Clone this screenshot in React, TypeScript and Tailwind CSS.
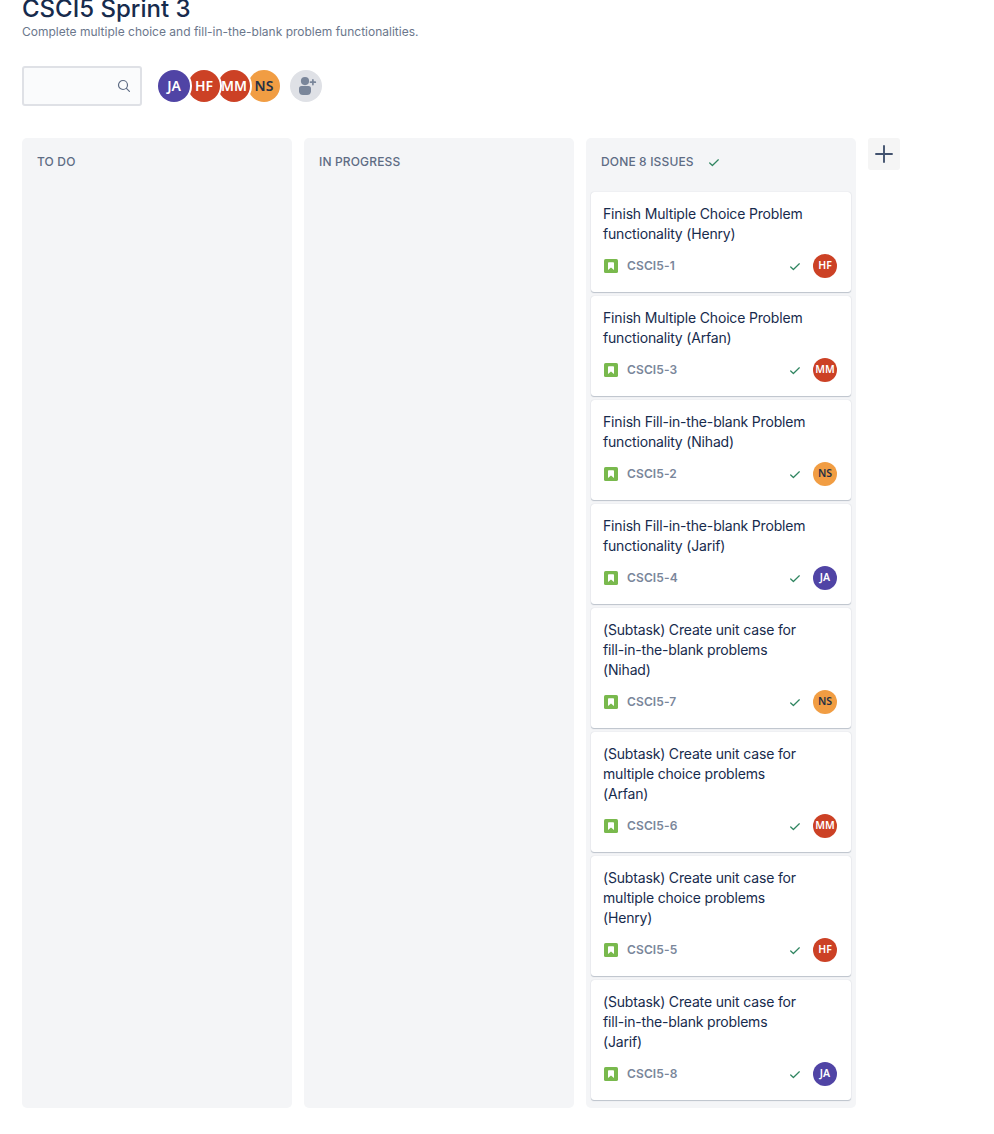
import type { ReactNode } from 'react';

type Person = { initials: string; color: string };

const people: Record<string, Person> = {
  JA: { initials: 'JA', color: 'bg-[#5044a5] text-white' },
  HF: { initials: 'HF', color: 'bg-[#cc4125] text-white' },
  MM: { initials: 'MM', color: 'bg-[#cc4125] text-white' },
  NS: { initials: 'NS', color: 'bg-[#f19d43] text-[#253045]' },
};

const team = [
  { key: 'JA', layer: 'z-40' },
  { key: 'HF', layer: 'z-30' },
  { key: 'MM', layer: 'z-20' },
  { key: 'NS', layer: 'z-10' },
];

const issues = [
  { id: 'CSCI5-1', lines: ['Finish Multiple Choice Problem', 'functionality (Henry)'], who: 'HF' },
  { id: 'CSCI5-3', lines: ['Finish Multiple Choice Problem', 'functionality (Arfan)'], who: 'MM' },
  { id: 'CSCI5-2', lines: ['Finish Fill-in-the-blank Problem', 'functionality (Nihad)'], who: 'NS' },
  { id: 'CSCI5-4', lines: ['Finish Fill-in-the-blank Problem', 'functionality (Jarif)'], who: 'JA' },
  { id: 'CSCI5-7', lines: ['(Subtask) Create unit case for', 'fill-in-the-blank problems', '(Nihad)'], who: 'NS' },
  { id: 'CSCI5-6', lines: ['(Subtask) Create unit case for', 'multiple choice problems', '(Arfan)'], who: 'MM' },
  { id: 'CSCI5-5', lines: ['(Subtask) Create unit case for', 'multiple choice problems', '(Henry)'], who: 'HF' },
  { id: 'CSCI5-8', lines: ['(Subtask) Create unit case for', 'fill-in-the-blank problems', '(Jarif)'], who: 'JA' },
];

function Check() {
  return (
    <svg className="block size-3 shrink-0" viewBox="0 0 12 12" fill="none" stroke="#2f8560" strokeWidth="1.25" strokeLinecap="round" strokeLinejoin="round">
      <path d="M1.700 7 4.400 9.500 10.300 3.800" />
    </svg>
  );
}

function Story() {
  return (
    <svg className="ml-px size-3.5 shrink-0" viewBox="0 0 14 14">
      <rect width="14" height="14" rx="1.6" fill="#79b94d" />
      <path d="M4 4a.8.8 0 0 1 .8-.8h4.400a.8.8 0 0 1 .8.8V11L7 8.500 4 11Z" fill="#fff" />
    </svg>
  );
}

function Card({ issue }: { issue: (typeof issues)[number] }) {
  const person = people[issue.who];
  return (
    <article className="rounded-[3px] bg-white px-3 pt-3 pb-3.5 shadow-[0_1px_1px_rgba(9,30,66,0.22),0_0_1px_rgba(9,30,66,0.22)]">
      <p className="text-[14px] leading-5 tracking-[-0.17px] whitespace-nowrap text-[#172b4d]">
        {issue.lines.map((line) => (
          <span key={line} className="block">{line}</span>
        ))}
      </p>
      <div className="mt-2.5 flex h-6 items-center pr-0.5">
        <Story />
        <span className="ml-[9px] flex-1 text-[12px] leading-4 font-semibold tracking-[0.12px] text-[#7a869a]">{issue.id}</span>
        <Check />
        <span className={`ml-3 flex size-6 items-center justify-center rounded-full font-['Noto_Sans',sans-serif] text-[10.5px] font-semibold ${person.color}`}>
          {person.initials}
        </span>
      </div>
    </article>
  );
}

function Column({ title, children }: { title: string; children?: ReactNode }) {
  return (
    <section className="h-[970px] w-[270px] rounded-[5px] bg-[#f4f5f7] px-[5px]">
      <h2 className="flex h-[54px] items-start gap-[14px] pt-4 pl-2.5 text-[12px] leading-4 font-medium tracking-[0.15px] text-[#5e6c84]">
        {title}
        {children ? <span className="pt-0.5"><Check /></span> : null}
      </h2>
      <div className="flex flex-col gap-1">{children}</div>
    </section>
  );
}

export default function App() {
  return (
    <main className="h-[1134px] overflow-hidden bg-white pl-[22px] font-[Inter,sans-serif]">
      <h1 className="-mt-[5px] text-[24px] leading-7 font-medium text-[#172b4d]">CSCI5 Sprint 3</h1>
      <p className="mt-px text-[12px] leading-4 text-[#6b778c]">
        Complete multiple choice and fill-in-the-blank problem functionalities.
      </p>
      <div className="mt-[26px] flex h-10 items-center">
        <div className="flex h-10 w-[120px] items-center justify-end rounded-[3px] border-2 border-[#dfe1e6] bg-[#fafbfc] pr-[9px]">
          <svg className="size-[14px]" viewBox="0 0 14 14" fill="none" stroke="#5e6c84" strokeWidth="1.2" strokeLinecap="round">
            <circle cx="6" cy="6" r="4.500" />
            <path d="m9.400 9.400 3 3" />
          </svg>
        </div>
        <div className="isolate ml-4 flex -space-x-0.5">
          {team.map(({ key, layer }) => (
            <span key={key} className={`relative ${layer} flex size-8 items-center justify-center rounded-full pb-px font-['Noto_Sans',sans-serif] text-[14px] font-semibold ring-2 ring-white ${people[key].color}`}>
              {people[key].initials}
            </span>
          ))}
        </div>
        <div className="ml-2.5 flex size-8 items-center justify-center rounded-full bg-[#dfe1e6]">
          <svg className="size-8" viewBox="0 0 32 32" fill="#7a869a">
            <circle cx="15" cy="11.100" r="4.100" />
            <path d="M9 18.500a2.500 2.500 0 0 1 2.500-2.500h7a2.500 2.500 0 0 1 2.500 2.500v3a4 4 0 0 1-4 3.500h-4a4 4 0 0 1-4-3.500Z" />
            <path d="M22.900 9.800v4.800M20.500 12.200h4.800" stroke="#7a869a" strokeWidth="1.700" strokeLinecap="round" />
          </svg>
        </div>
      </div>
      <div className="mt-8 flex items-start gap-3">
        <Column title="TO DO" />
        <Column title="IN PROGRESS" />
        <Column title="DONE 8 ISSUES">
          {issues.map((issue) => (
            <Card key={issue.id} issue={issue} />
          ))}
        </Column>
        <button className="flex size-8 items-center justify-center rounded-[3px] bg-[#f5f5f5]" aria-label="Add column">
          <svg className="size-8" viewBox="0 0 32 32" stroke="#42526e" strokeWidth="1.900" strokeLinecap="round">
            <path d="M16 8v16M8 16h16" />
          </svg>
        </button>
      </div>
    </main>
  );
}
